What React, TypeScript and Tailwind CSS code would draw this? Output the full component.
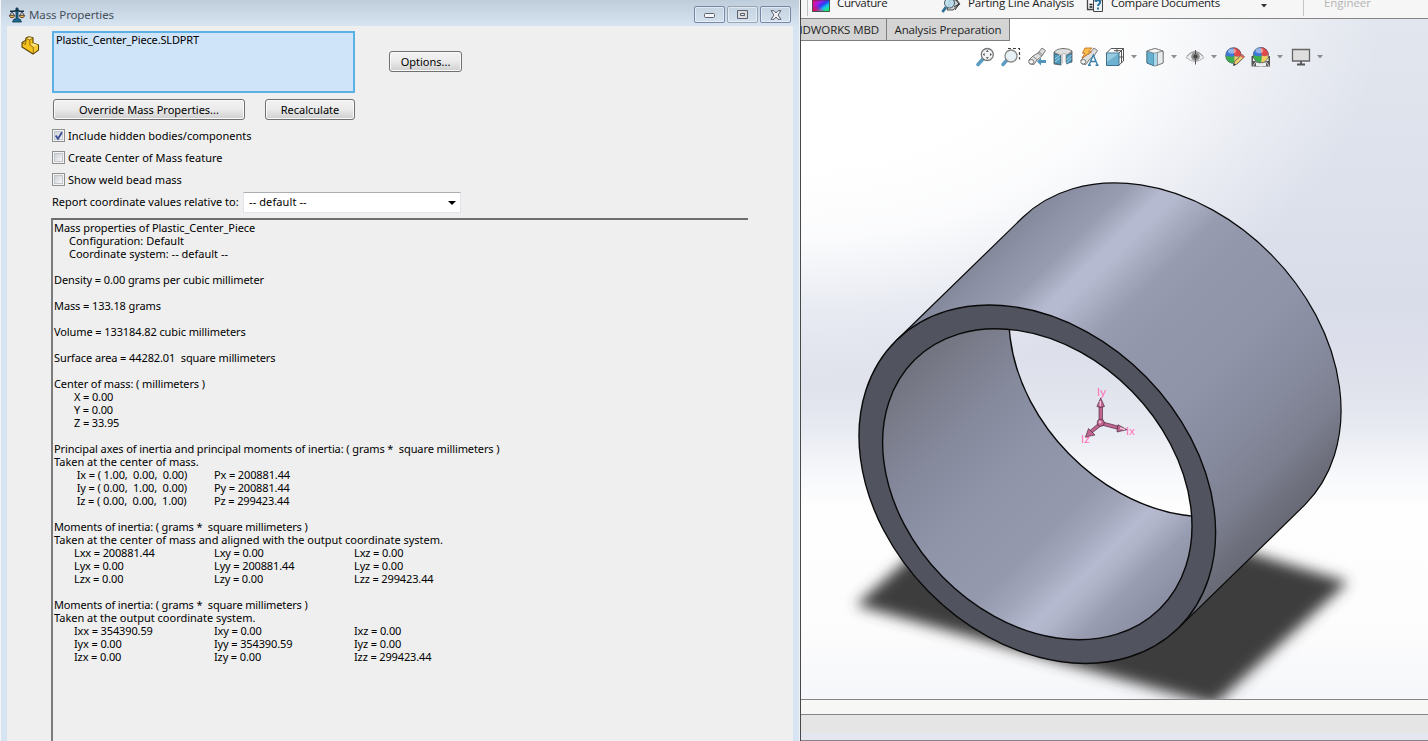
import type { ReactNode } from "react";

const UI = "font-['Noto_Sans',sans-serif] text-[11px] leading-[13px] text-black whitespace-pre";

function ScaleIcon() {
  return (
    <svg width="16" height="16" viewBox="0 0 16 16">
      <path d="M7 1h2v11h2l1.500 3h-9L5 12h2z" fill="#1b6d92" stroke="#0d3348" strokeWidth=".8" />
      <path d="M1 4.200h4.500L8 3l2.500 1.200H15" stroke="#0d3348" strokeWidth="1.600" fill="none" />
      <path d="M3 4.500L.8 8.500M3 4.500L5.200 8.500M13 4.500l-2.200 4M13 4.500l2.200 4" stroke="#333" strokeWidth=".8" />
      <path d="M.5 8.300h5c0 1.600-1 2.400-2.500 2.400S.5 9.900.5 8.300zM10.500 8.300h5c0 1.600-1 2.400-2.500 2.400s-2.500-.8-2.500-2.400z" fill="#f5b94a" stroke="#35271a" strokeWidth=".8" />
    </svg>
  );
}

function PartIcon() {
  return (
    <svg width="19" height="19" viewBox="0 0 19 19" strokeLinejoin="round">
      <path d="M1 6.500L4.500 4.500 5 2l3-1.200 4 1V7l5.500 2v5L12 18 1 11z" fill="#f6c21c" stroke="#59430a" strokeWidth="1.100" />
      <path d="M5.500 2.500l3-1.200 3 .8L9 3.800zM9.500 8.500l3-1.300 4.300 1.700-4.300 2z" fill="#ffe680" />
      <path d="M12.300 11.300l4.700-2v4.200l-4.700 3.800z" fill="#f8cc37" />
      <path d="M5 2.500L8.800 4v5l3.500 2.200V17M8.800 4L12 2M1.500 7l3 1.500L5 4" fill="none" stroke="#80600d" strokeWidth=".8" />
    </svg>
  );
}

function Caption({ children, dim }: { children: ReactNode; dim?: boolean }) {
  return (
    <div
      className={
        "flex h-[17px] w-[31px] items-center justify-center rounded-[2px] border shadow-[inset_0_0_0_1px_rgba(255,255,255,0.45)] " +
        (dim ? "border-[#98a6b4]" : "border-[#7886a8]")
      }
    >
      {children}
    </div>
  );
}

function Button({ label, width }: { label: string; width: string }) {
  return (
    <button
      className={`${UI} ${width} block h-[21px] rounded-[3px] border border-[#707070] bg-linear-to-b from-[#f2f2f2] from-0% via-[#ebebeb] via-48% to-[#cfcfcf] to-100% text-center shadow-[inset_0_0_0_1px_#fafafa]`}
    >
      {label}
    </button>
  );
}

function Check({ label, checked }: { label: string; checked?: boolean }) {
  return (
    <label className="flex h-[22px] items-center gap-[3px]">
      <span className="flex size-[13px] items-center justify-center border border-[#8e8f8f] bg-[#f4f4f4]">
        <span className="size-[9px] border border-[#c2c5ca] bg-linear-to-br from-[#cdd1d8] to-[#f6f6f6]">
          {checked && (
            <svg width="8" height="8" viewBox="0 0 8 8" className="overflow-visible">
              <path d="M.7 3.500L3 6.700 7 .2" fill="none" stroke="#3b5096" strokeWidth="1.900" />
            </svg>
          )}
        </span>
      </span>
      <span className={UI}>{label}</span>
    </label>
  );
}

type Line = string | { at: number; cells: string[] };

const report: Line[] = [
  "Mass properties of Plastic_Center_Piece",
  { at: 15, cells: ["Configuration: Default"] },
  { at: 15, cells: ["Coordinate system: -- default --"] },
  "",
  "Density = 0.00 grams per cubic millimeter",
  "",
  "Mass = 133.18 grams",
  "",
  "Volume = 133184.82 cubic millimeters",
  "",
  "Surface area = 44282.01  square millimeters",
  "",
  "Center of mass: ( millimeters )",
  { at: 20, cells: ["X = 0.00"] },
  { at: 20, cells: ["Y = 0.00"] },
  { at: 20, cells: ["Z = 33.95"] },
  "",
  "Principal axes of inertia and principal moments of inertia: ( grams *  square millimeters )",
  "Taken at the center of mass.",
  { at: 20, cells: [" Ix = ( 1.00,  0.00,  0.00)", "Px = 200881.44"] },
  { at: 20, cells: [" Iy = ( 0.00,  1.00,  0.00)", "Py = 200881.44"] },
  { at: 20, cells: [" Iz = ( 0.00,  0.00,  1.00)", "Pz = 299423.44"] },
  "",
  "Moments of inertia: ( grams *  square millimeters )",
  "Taken at the center of mass and aligned with the output coordinate system.",
  { at: 20, cells: ["Lxx = 200881.44", "Lxy = 0.00", "Lxz = 0.00"] },
  { at: 20, cells: ["Lyx = 0.00", "Lyy = 200881.44", "Lyz = 0.00"] },
  { at: 20, cells: ["Lzx = 0.00", "Lzy = 0.00", "Lzz = 299423.44"] },
  "",
  "Moments of inertia: ( grams *  square millimeters )",
  "Taken at the output coordinate system.",
  { at: 20, cells: ["Ixx = 354390.59", "Ixy = 0.00", "Ixz = 0.00"] },
  { at: 20, cells: ["Iyx = 0.00", "Iyy = 354390.59", "Iyz = 0.00"] },
  { at: 20, cells: ["Izx = 0.00", "Izy = 0.00", "Izz = 299423.44"] },
];

function tracking(line: string) {
  if (line.startsWith("Taken")) return "tracking-[-0.01px]";
  if (line.startsWith("Moments")) return "tracking-[-0.14px]";
  if (line.startsWith("Mass properties")) return "tracking-[-0.07px]";
  return "tracking-[-0.1px]";
}

function Report() {
  return (
    <div className="mt-[5px] ml-[44px] w-[697px] grow border-t-2 border-l-2 border-t-[#6d6d6d] border-l-[#7c7c7c] pt-px pl-px">
      {report.map((line, i) =>
        typeof line === "string" ? (
          <div key={i} className={`${UI} h-[13px] ${tracking(line)}`}>
            {line}
          </div>
        ) : (
          <div key={i} className={`${UI} flex h-[13px] ${line.at === 15 ? "pl-[15px]" : "pl-[20px] tracking-[-0.13px]"}`}>
            {line.cells.map((c) => (
              <span key={c} className="w-[140px] shrink-0">
                {c}
              </span>
            ))}
          </div>
        ),
      )}
    </div>
  );
}

function MassDialog() {
  return (
    <section className="flex h-[741px] w-[801px] shrink-0 flex-col border-r border-[#484848] bg-[#d7e4f1] pr-[7px] pl-[7px] shadow-[inset_1px_0_0_#f3f6f9,inset_-1px_0_0_#eef3f8]">
      <header className="-mx-[6px] flex h-[26px] shrink-0 items-center bg-linear-to-b from-[#bfccda] to-[#d7e4f1] pt-[3px] pr-[8px] pl-[8px]">
        <ScaleIcon />
        <span className="ml-[4px] font-['Noto_Sans',sans-serif] text-[11.5px] leading-[16px] tracking-[-0.12px] text-[#45505c]">Mass Properties</span>
        <div className="ml-auto flex gap-[2px]">
          <Caption>
            <svg width="12" height="6" viewBox="0 0 12 6" className="mt-[3px]">
              <rect x=".5" y=".5" width="10" height="4" rx="1" fill="#f5f5f5" stroke="#5b6072" />
            </svg>
          </Caption>
          <Caption dim>
            <svg width="11" height="9" viewBox="0 0 11 9">
              <path d="M.5.5h10v8H.5z" fill="#dcdcdc" stroke="#5b6072" />
              <path d="M3.500 3.500h4v2h-4z" fill="#e8edf3" stroke="#5b6072" />
            </svg>
          </Caption>
          <Caption>
            <svg width="12" height="10" viewBox="0 0 12 10">
              <path d="M1 .7h3L6 3 8 .7h3L8 5l3 4.300H8L6 7 4 9.300H1L4 5z" fill="#f3f3f3" stroke="#5b6072" strokeLinejoin="round" />
            </svg>
          </Caption>
        </div>
      </header>
      <div className="flex grow flex-col overflow-hidden bg-[#efefef]">
        <div className="flex pt-[5px]">
          <div className="w-[45px] shrink-0 pt-[5px] pl-[14px]">
            <PartIcon />
          </div>
          <div className={`${UI} h-[62px] w-[303px] border-2 border-[#5bb1e3] bg-[#cfe4f8] pl-[2px] tracking-[-0.15px]`}>Plastic_Center_Piece.SLDPRT</div>
          <div className="pt-[20px] pl-[34px]">
            <Button label="Options..." width="w-[73px]" />
          </div>
        </div>
        <div className="flex gap-[20px] pt-[6px] pl-[46px]">
          <Button label="Override Mass Properties..." width="w-[192px]" />
          <Button label="Recalculate" width="w-[90px]" />
        </div>
        <div className="mt-[4px] ml-[45px]">
          <Check label="Include hidden bodies/components" checked />
          <Check label="Create Center of Mass feature" />
          <Check label="Show weld bead mass" />
        </div>
        <div className="mt-[2px] ml-[45px] flex h-[21px] items-center">
          <span className={`${UI} w-[191px] pb-[2px]`}>Report coordinate values relative to:</span>
          <div className={`${UI} flex h-[21px] w-[218px] items-center border border-[#e2e3ea] border-t-[#abadb3] bg-white pr-[4px] pl-[5px]`}>
            <span className="grow pb-[2px] tracking-[0.1px]">-- default --</span>
            <svg width="8" height="4" viewBox="0 0 8 4">
              <path d="M0 0h8L4 4z" fill="#000" />
            </svg>
          </div>
        </div>
        <Report />
      </div>
    </section>
  );
}

function Ribbon() {
  const text = "font-['Open_Sans',sans-serif] text-[11.5px] leading-[16px] text-[#1c1c1c] whitespace-pre";
  return (
    <div className="flex h-[19px] shrink-0 items-start overflow-hidden border-b border-[#858585] bg-[#f6f6f6] pl-[6px]">
      <div className="h-[16px] w-[5px] border-l border-[#c4c4c4]" />
      <svg width="18" height="12" viewBox="0 0 18 12">
        <defs>
          <linearGradient id="cv" x1="0" y1="0" x2="1" y2="1">
            <stop offset=".05" stopColor="#e8106a" />
            <stop offset=".3" stopColor="#a31be8" />
            <stop offset=".5" stopColor="#2a3cf4" />
            <stop offset=".68" stopColor="#12c8f0" />
            <stop offset=".85" stopColor="#1fe67c" />
          </linearGradient>
          <linearGradient id="hot" x1="0" y1="1" x2=".6" y2=".4">
            <stop offset=".1" stopColor="#f0103a" />
            <stop offset="1" stopColor="#e010c0" stopOpacity="0" />
          </linearGradient>
        </defs>
        <path d="M.5 0h17v11.500H.5z" fill="url(#cv)" stroke="#333" strokeWidth=".8" />
        <path d="M1 0v11h12z" fill="url(#hot)" />
      </svg>
      <span className={`${text} -mt-[5px] ml-[7px] w-[104px] tracking-[-0.35px]`}>Curvature</span>
      <svg width="20" height="13" viewBox="0 0 20 13">
        <path d="M9 0h7l3 4-7 6H6z" fill="#c9d2d8" stroke="#555" />
        <path d="M13 7l5-3M15 0l3 4-4 6" stroke="#333" fill="none" />
        <circle cx="8.500" cy="3" r="5" fill="#b6dcec" fillOpacity=".85" stroke="#4b5960" />
        <path d="M5 7L1.500 12" stroke="#2f6f93" strokeWidth="2.800" />
      </svg>
      <span className={`${text} -mt-[5px] ml-[7px] w-[118px] tracking-[-0.18px]`}>Parting Line Analysis</span>
      <svg width="18" height="12" viewBox="0 0 18 12">
        <path d="M1.500 0v9.500H8" fill="none" stroke="#444" strokeWidth="1.300" />
        <path d="M3.500 4.500h3M3.500 7h3" stroke="#222" strokeWidth="1.300" />
        <path d="M7.500 0h9v11.500h-9z" fill="#eef3f6" stroke="#444" />
        <path d="M9.700 2c.3-2.300 4.500-2.300 4.500.3 0 1.700-2.200 1.700-2.200 3.700M12 7.500v2" stroke="#1d6e9c" strokeWidth="1.900" fill="none" />
      </svg>
      <span className={`${text} -mt-[5px] ml-[7px] w-[150px] tracking-[-0.3px]`}>Compare Documents</span>
      <svg width="6" height="4" viewBox="0 0 6 4" className="mt-[4px]">
        <path d="M0 0h6L3 3.500z" fill="#333" />
      </svg>
      <div className="ml-[36px] h-[16px] w-[21px] border-l border-[#c4c4c4]" />
      <span className="-mt-[5px] font-['Open_Sans',sans-serif] text-[11.5px] leading-[16px] tracking-[-0.05px] text-[#b4b4b4]">Engineer</span>
    </div>
  );
}

function Drop() {
  return (
    <svg width="6" height="4" viewBox="0 0 6 4">
      <path d="M0 0h6L3 3.500z" fill="#8d8d8d" />
    </svg>
  );
}

function Ball() {
  return (
    <g>
      <circle cx="8.500" cy="8.500" r="8" fill="#3c78d8" />
      <path d="M8.500.5a8 8 0 0 1 8 8q-4 2-7 .5-1-4-1-8.500z" fill="#e04a48" />
      <path d="M.5 8.500Q5 10.500 9.500 9q0 5-1 7.500a8 8 0 0 1-8-8z" fill="#3fae4c" />
      <path d="M9.500 9q3.500 1.500 7-.5a8 8 0 0 1-8 8q1.200-3.500 1-7.500z" fill="#f1cf63" />
      <ellipse cx="7" cy="4" rx="4" ry="2.600" fill="#fff" opacity=".45" />
      <circle cx="8.500" cy="8.500" r="7.800" fill="none" stroke="#555" strokeWidth=".5" />
    </g>
  );
}

const I = ({ children }: { children: ReactNode }) => (
  <svg width="20" height="20" viewBox="0 0 20 20" className="shrink-0">
    {children}
  </svg>
);

function ViewToolbar() {
  return (
    <div className="flex h-[20px] items-center pl-[174px]">
      <div className="flex gap-[6px]">
        <I>
          <path d="M8 12l-5 5.500" stroke="#5b9cc0" strokeWidth="3.600" strokeLinecap="round" />
          <circle cx="12.300" cy="7.500" r="6" fill="#f2f4f5" stroke="#777" strokeWidth="1.300" />
          <path d="M12.300 3l1.500 1.800h-3zM12.300 12l1.500-1.800h-3zM7.800 7.500l1.800-1.500v3zM16.800 7.500L15 6v3z" fill="#444" />
        </I>
        <I>
          <path d="M7 1.500h11.500v11" fill="none" stroke="#444" strokeWidth="1.200" strokeDasharray="3 2" />
          <path d="M6 13l-4 4.500" stroke="#5b9cc0" strokeWidth="3.400" strokeLinecap="round" />
          <circle cx="10" cy="9" r="6" fill="#e6f0f4" fillOpacity=".95" stroke="#888" strokeWidth="1.300" />
        </I>
        <I>
          <path d="M2 13l4-4 5-3 4-5 3.500 2.500L15 9l-5 4-3 4.500-4-.5z" fill="#dedede" stroke="#7a7a7a" />
          <path d="M6 9.500l4.500 3.500M10.500 6l4.500 3M12 5l3.500 2.500" stroke="#8a8a8a" />
          <ellipse cx="4.300" cy="14.800" rx="2.600" ry="2.200" fill="#f5f5f5" stroke="#777" />
          <path d="M10 14.500l4-4v2.500h5v3h-5v2.500z" fill="#4f94ba" />
        </I>
        <I>
          <path d="M1 5q3-3.500 9-3.500T19 4v11l-5 1V8q-2-2-6 .5V18l-7-1z" fill="#8a8a8a" stroke="#555" strokeWidth=".8" />
          <path d="M1.500 5q3-3 8.500-3t8.500 2L14 7.500q-3-2-6 .5z" fill="#dedede" />
          <path d="M8 8q1-2 5.500-1.500V15L8 17z" fill="#c9c9c9" />
          <path d="M10 7.200h2v8.600l-2 .6z" fill="#f4f4f4" />
          <path d="M1.500 6.500L7.500 9v8.500l-6-1.500zM13.500 8.500l5-2V15l-5 2z" fill="#4d9cc2" stroke="#35637c" strokeWidth=".6" />
          <path d="M2 12l5-4M2 15l5-4M13.500 13l5-5M13.500 16l5-5" stroke="#cfe7f2" strokeWidth=".7" />
        </I>
        <I>
          <path d="M2 13l4-4 5-3 4-5 3.500 2.500L15 9l-5 4-3 4.500-4-.5z" fill="#dedede" stroke="#7a7a7a" />
          <ellipse cx="4.300" cy="14.800" rx="2.600" ry="2.200" fill="#f5f5f5" stroke="#777" />
          <path d="M6 1h7L9.500 4.800h3L3 11l3-4.800H3.500z" fill="#f9bf4a" stroke="#c86f22" strokeWidth=".9" />
          <path d="M10 18l4.300-10 4.200 10M11.500 14.500h5.500M9 18.200h3M16.500 18.200h3" fill="none" stroke="#3980aa" strokeWidth="1.400" />
        </I>
        <I>
          <path d="M6 1.500h12.500V14L14 18M6 1.500L1.500 6M18.500 1.500L14 6M12 1.500V5M14 10h4.500M9 3.700h7.500V16" fill="none" stroke="#555" strokeWidth="1" />
          <path d="M1.500 6H14v12.500H1.500z" fill="#6fb1d0" stroke="#3b6f8b" />
          <path d="M2 6.500h11.500L2 15z" fill="#a9d6e8" opacity=".7" />
        </I>
      </div>
      <div className="ml-[6px] flex w-[14px]"><Drop /></div>
      <I>
        <path d="M2 4l8-2.500L18 4v12l-8 3-8-3z" fill="#f5f5f5" stroke="#666" />
        <path d="M2 4l7 2.200v12.500L2 16z" fill="#66b0cf" stroke="#3b7390" strokeWidth=".8" />
        <path d="M9 6.200l3.500-1.200V18L9 18.700z" fill="#a8d8e8" />
        <path d="M12.500 5l5.500-1v12l-5.500 2z" fill="#e6ebed" stroke="#777" strokeWidth=".7" />
        <path d="M2 4l8-2.500L18 4 9 6.200z" fill="#f7f7f7" stroke="#777" strokeWidth=".7" />
      </I>
      <div className="ml-[6px] flex w-[14px]"><Drop /></div>
      <I>
        <path d="M1 10.500q9-12 18 0-9 8-18 0z" fill="#ededed" stroke="#b0b0b0" />
        <path d="M2 9q8-9 16 0" fill="none" stroke="#888" strokeWidth=".8" />
        <circle cx="10.500" cy="9.500" r="4.300" fill="#8c8c8c" />
        <circle cx="10.500" cy="9.500" r="2" fill="#3a3a3a" />
        <path d="M10.500 3v14.500" stroke="#555" strokeWidth="1" />
      </I>
      <div className="ml-[6px] flex w-[14px]"><Drop /></div>
      <I>
        <Ball />
        <path d="M8.500 18.500l1-4L17 7.500l2.500 2.300L12 17z" fill="#f0cf72" stroke="#555" strokeWidth=".9" />
        <path d="M15.500 9L17 7.500l2.500 2.300L18 11.300z" fill="#e0645c" />
        <path d="M8.500 18.500l.6-2 1.300 1.400z" fill="#222" />
      </I>
      <div className="ml-[6px] flex">
        <I>
          <path d="M.5 9h18.500v10.500H.5z" fill="#555" />
          <path d="M2 11h3v3H2zM14.500 11h3v3h-3zM5 15.500h3V19H5zM12 15.500h3V19h-3z" fill="#eee" />
          <g transform="translate(1.500 -.3) scale(.98)">
            <Ball />
          </g>
          <path d="M5 14.500L2 19M15 14.500l3 4.500M8.500 16.500h3V19h-3z" fill="#f2f2f2" stroke="#f2f2f2" strokeWidth=".8" />
        </I>
      </div>
      <div className="ml-[6px] flex w-[14px]"><Drop /></div>
      <I>
        <path d="M1.500 2.500h17v11.500h-17z" fill="#dedede" stroke="#666" strokeWidth="1.300" />
        <path d="M10 14v3M6 17.500h8" stroke="#555" strokeWidth="1.800" />
      </I>
      <div className="ml-[6px] flex w-[14px]"><Drop /></div>
    </div>
  );
}

function Scene() {
  return (
    <svg width="627" height="680" viewBox="801 19 627 680" className="absolute top-0 left-0">
      <defs>
        <linearGradient id="sky" gradientUnits="userSpaceOnUse" x1="0" y1="19" x2="0" y2="699">
          <stop offset="0" stopColor="#e2e6ee" />
          <stop offset=".3" stopColor="#dce0eb" />
          <stop offset=".42" stopColor="#d9ddea" />
          <stop offset=".54" stopColor="#e0e2ec" />
          <stop offset=".6" stopColor="#e8eaf2" />
          <stop offset=".67" stopColor="#f7f8fb" />
          <stop offset=".72" stopColor="#fefefe" />
          <stop offset=".88" stopColor="#fdfdfd" />
          <stop offset="1" stopColor="#f6f7fa" />
        </linearGradient>
        <radialGradient id="glow" gradientUnits="userSpaceOnUse" cx="0" cy="0" r="1" gradientTransform="translate(801 19) scale(580 365)">
          <stop offset=".4" stopColor="#fff" />
          <stop offset=".6" stopColor="#fff" stopOpacity=".88" />
          <stop offset=".8" stopColor="#fff" stopOpacity=".4" />
          <stop offset="1" stopColor="#fff" stopOpacity="0" />
        </radialGradient>
        <linearGradient id="outer" gradientUnits="userSpaceOnUse" x1="896.300" y1="340.500" x2="1178.500" y2="627.900">
          <stop offset="0" stopColor="#84889b" />
          <stop offset=".04" stopColor="#8b8fa3" />
          <stop offset=".13" stopColor="#989cb0" />
          <stop offset=".2" stopColor="#b6bad0" />
          <stop offset=".23" stopColor="#b6bad0" />
          <stop offset=".34" stopColor="#989cb0" />
          <stop offset=".42" stopColor="#9397ac" />
          <stop offset=".6" stopColor="#9094a9" />
          <stop offset=".76" stopColor="#868a9d" />
          <stop offset=".88" stopColor="#7c7f8f" />
          <stop offset=".96" stopColor="#6d6f7c" />
          <stop offset="1" stopColor="#686a76" />
        </linearGradient>
        <linearGradient id="inner" gradientUnits="userSpaceOnUse" x1="914.800" y1="359.500" x2="1159.600" y2="608.900">
          <stop offset="0" stopColor="#71737f" />
          <stop offset=".1" stopColor="#7b7d8c" />
          <stop offset=".25" stopColor="#868a9d" />
          <stop offset=".42" stopColor="#9094a9" />
          <stop offset=".62" stopColor="#9599ae" />
          <stop offset=".7" stopColor="#a2a6bb" />
          <stop offset=".78" stopColor="#b6bad0" />
          <stop offset=".82" stopColor="#b0b4c9" />
          <stop offset=".9" stopColor="#989cb0" />
          <stop offset="1" stopColor="#8b8fa3" />
        </linearGradient>
        <clipPath id="bore">
          <ellipse cx="1037.300" cy="484.200" rx="174.700" ry="132.600" transform="rotate(45.540 1037.300 484.200)" />
        </clipPath>
        <mask id="solid" maskUnits="userSpaceOnUse" x="801" y="19" width="627" height="680">
          <path d="M801 19h627v680H801z" fill="#fff" />
          <g clipPath="url(#bore)">
            <ellipse cx="1163.700" cy="361.200" rx="174.700" ry="132.600" transform="rotate(45.540 1163.700 361.200)" fill="#000" />
          </g>
        </mask>
        <filter id="soft" x="-10%" y="-20%" width="120%" height="140%">
          <feGaussianBlur stdDeviation="7" />
        </filter>
      </defs>
      <path d="M801 19h627v680H801z" fill="url(#sky)" />
      <path d="M801 19h627v680H801z" fill="url(#glow)" />
      <g mask="url(#solid)">
        <path d="M856 605L1000 478L1348 582L1214 705z" fill="#3d3d3d" filter="url(#soft)" />
        <path
          d="M896.300 340.500L1022.600 217.500A201.400 152.800 45.540 0 1 1304.800 504.900L1178.500 627.900z"
          fill="url(#outer)"
          stroke="#0a0a0a"
          strokeWidth="1.200"
        />
        <ellipse cx="1037.300" cy="484.200" rx="201.400" ry="152.800" transform="rotate(45.540 1037.300 484.200)" fill="#51535f" stroke="#0a0a0a" strokeWidth="1.400" />
        <path d="M801 230h627v469H801z" fill="url(#inner)" clipPath="url(#bore)" />
      </g>
      <ellipse cx="1037.300" cy="484.200" rx="174.700" ry="132.600" transform="rotate(45.540 1037.300 484.200)" fill="none" stroke="#0a0a0a" strokeWidth="1.400" />
      <g clipPath="url(#bore)">
        <ellipse cx="1163.700" cy="361.200" rx="174.700" ry="132.600" transform="rotate(45.540 1163.700 361.200)" fill="none" stroke="#0a0a0a" strokeWidth="1.400" />
      </g>
      <g stroke="#3d1c2d" strokeWidth=".6" fill="#bf6590">
        <path d="M1099 405h3.500v17H1099zM1101 421.500l17 4.500-.8 3.200-16.700-4.500zM1102 425l-10 8-2-2.500 9.500-8z" />
        <path d="M1100.700 398l3.800 8.500q-3.800 2-7.600 0zM1127 429.700l-9-5-1 7.300zM1085.500 437l3-8.500 6.500 6.500z" />
        <circle cx="1100.700" cy="422.800" r="3.600" />
      </g>
      <circle cx="1100" cy="422" r="1.500" fill="#eab3cf" />
      <path d="M1100.300 401v5M1120 428l5 1.500" stroke="#f3c3da" strokeWidth="1.400" />
      <g fill="#ff6fb8" fontFamily="Liberation Sans, sans-serif" fontSize="11.500">
        <text x="1097" y="395.500">Iy</text>
        <text x="1126" y="435">Ix</text>
        <text x="1081" y="442.500">Iz</text>
      </g>
    </svg>
  );
}

export default function App() {
  const tab = "flex h-[22px] items-center border-r border-b border-[#7f7f7f] bg-[#d4d4d4] font-['Open_Sans',sans-serif] text-[11.5px] leading-[16px] text-[#1f1f1f] whitespace-pre";
  return (
    <main className="flex h-[741px] w-[1428px] overflow-hidden bg-white">
      <MassDialog />
      <section className="flex w-[627px] flex-col">
        <Ribbon />
        <div className="relative h-[680px] shrink-0 overflow-hidden">
          <Scene />
          <div className="relative">
            <div className="flex">
              <div className={`${tab} w-[86px] justify-end overflow-hidden pr-[7px] tracking-[-0.1px]`}>IDWORKS MBD</div>
              <div className={`${tab} w-[123px] justify-center tracking-[-0.14px]`}>Analysis Preparation</div>
            </div>
            <div className="pt-[6px]">
              <ViewToolbar />
            </div>
          </div>
        </div>
        <div className="h-[16px] shrink-0 border-y border-[#858585] bg-[#f7f7f6]" />
        <div className="h-[18px] shrink-0 bg-[#e5e5e5]" />
        <div className="h-[8px] shrink-0 border-b border-[#858585] bg-[#e4e7f0]" />
      </section>
    </main>
  );
}
